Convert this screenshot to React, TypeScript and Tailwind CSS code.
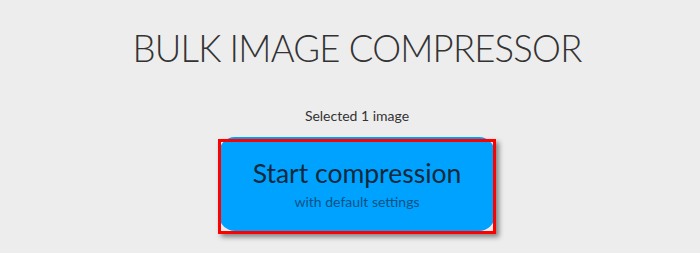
import React from "react";

const App = () => {
  return (
    <div className="min-h-[253px] w-full bg-[#ededed] font-['Lato',sans-serif] pl-[14px]">
      <div className="flex flex-col items-center pt-[22px]">
        <h1 className="text-[36.5px] leading-[52px] font-light tracking-[-0.8px] text-[#333333]">
          BULK IMAGE COMPRESSOR
        </h1>

        <p className="mt-[32px] text-[14px] leading-[20px] text-[#333333]">
          Selected 1 image
        </p>

        <div className="relative mt-[11px]">
          <button className="flex flex-col items-center justify-center w-[276px] h-[94px] rounded-2xl bg-[#00a2ff]">
            <span className="text-[26.5px] leading-[32px] text-[#102a3c] font-normal">
              Start compression
            </span>
            <span className="mt-[4px] text-[14px] leading-[18px] text-[#0a5283]">
              with default settings
            </span>
          </button>

          {/* annotation box */}
          <div className="absolute left-[-1px] top-[2px] w-[278px] h-[95px] border-[3px] border-[#ff0000] shadow-[3px_3px_5px_rgba(0,0,0,0.45)] pointer-events-none" />
        </div>
      </div>
    </div>
  );
};

export default App;
